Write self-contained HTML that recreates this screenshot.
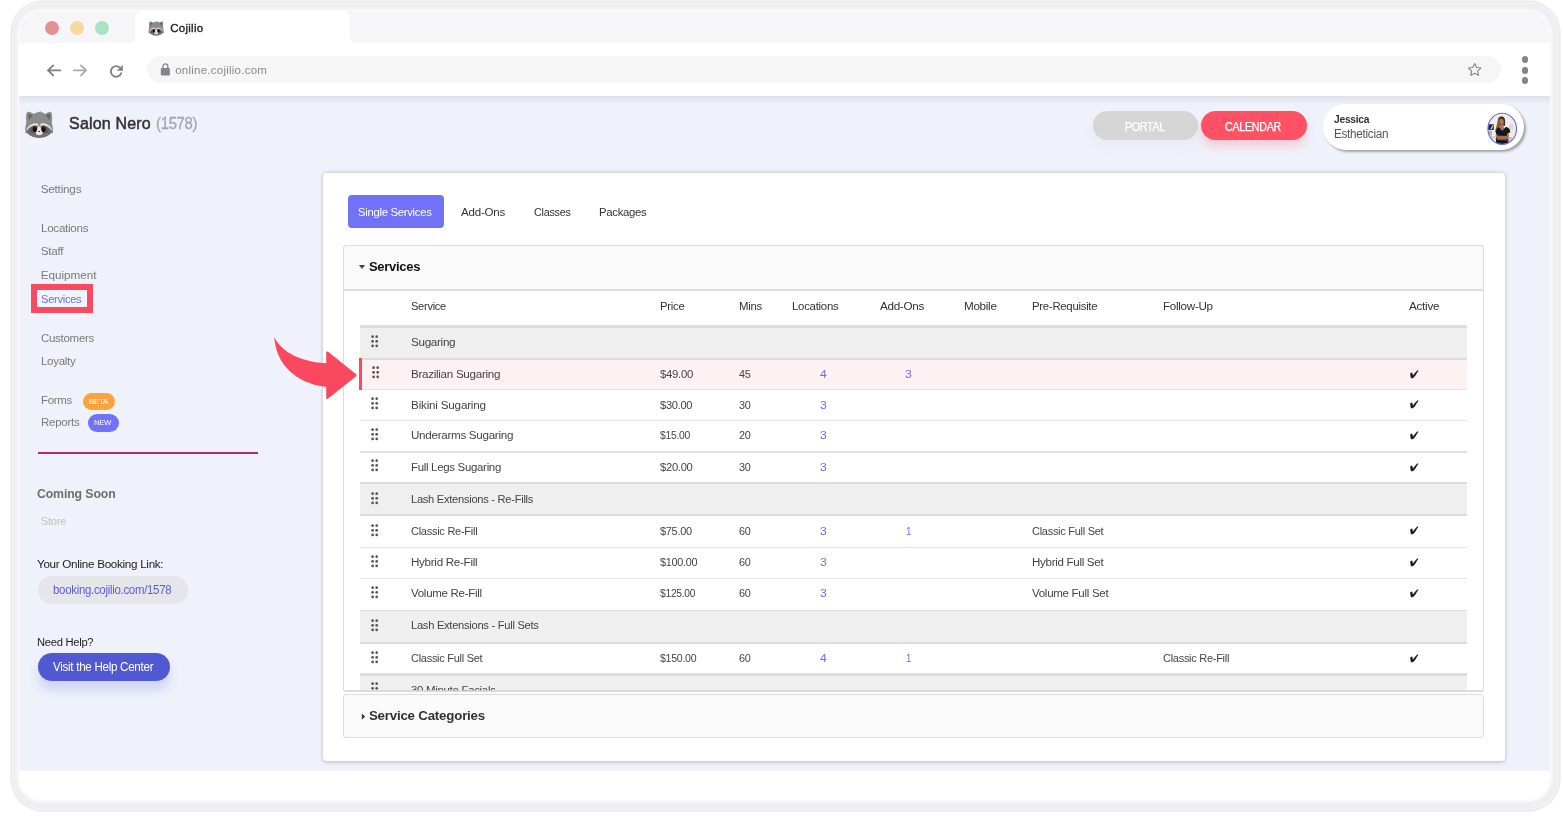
<!DOCTYPE html>
<html><head><meta charset="utf-8"><title>Cojilio</title>
<style>
*{box-sizing:border-box;margin:0;padding:0}
html,body{width:1563px;height:822px;overflow:hidden;background:#fff;font-family:"Liberation Sans",sans-serif}
.a{position:absolute}
.t{position:absolute;white-space:nowrap;line-height:20px;height:20px}
#frame{left:9.6px;top:-.2px;width:1551.7px;height:812.5px;border-radius:33px;background:#f2f2f1}
#f2{left:10.5px;top:.7px;width:1549.9px;height:810.7px;border-radius:32px;background:#e8e8f2}
#f3{left:11.9px;top:2px;width:1547.4px;height:808.2px;border-radius:31px;background:#f5f5f6}
#f4{left:13.1px;top:3.1px;width:1545.3px;height:806.1px;border-radius:30px;background:#eeeef3}
#edge{left:0;top:0;width:100%;height:100%;border-radius:24px;box-shadow:inset 0 0 0 1.3px rgba(250,250,252,.85)}
#win{left:18px;top:10px;width:1533px;height:791.4px;border-radius:24px;background:#fff;overflow:hidden;box-shadow:0 0 2.5px .6px rgba(251,251,253,.95)}
#pg{left:-18px;top:-10px;width:1563px;height:822px;will-change:transform}
#tabbar{left:0;top:0;width:1563px;height:43.2px;background:#f6f6f9}
#tab{left:135px;top:9.5px;width:215px;height:34px;background:#fff;border-radius:9px 9px 0 0}
.tl{width:14.5px;height:14.5px;border-radius:50%;top:20.7px}
#url{left:146.7px;top:56.3px;width:1354.3px;height:27.1px;border-radius:14px;background:#f6f6f6}
#app{left:0;top:96px;width:1563px;height:674.5px;background:#eff2fb}
#appsh{left:0;top:96px;width:1563px;height:9px;background:linear-gradient(#dfe1ea,#eff2fb)}
#card{left:322.5px;top:173px;width:1182px;height:588px;background:#fff;border-radius:4px;box-shadow:0 .5px 4.5px rgba(0,0,10,.24)}
.hl{left:360px;width:1107px;background:#ddd}
.dots{width:7px;height:12px}
</style></head><body>
<div class="a" id="frame"></div><div class="a" id="f2"></div><div class="a" id="f3"></div><div class="a" id="f4"></div>
<div class="a" id="win"><div class="a" id="pg">
 <div class="a" id="tabbar"></div>
 <div class="a" id="tab"></div>
 <div class="a" style="left:129px;top:37.2px;width:6px;height:6px;background:radial-gradient(circle at 0 0,#f6f6f9 5.6px,#fff 6.2px)"></div>
 <div class="a" style="left:350px;top:37.2px;width:6px;height:6px;background:radial-gradient(circle at 100% 0,#f6f6f9 5.6px,#fff 6.2px)"></div>
 <div class="a tl" style="left:44.7px;background:#e59193"></div>
 <div class="a tl" style="left:69.7px;background:#f6d9a0"></div>
 <div class="a tl" style="left:94.7px;background:#a9e3c1"></div>
 <div class="a" id="url"></div>
 <div class="a" id="app"></div>
 <div class="a" id="appsh"></div>
 <div class="a" id="card"></div>
 <!-- nav icons -->
 <svg class="a" style="left:44px;top:60px" width="90" height="22" viewBox="44 60 90 22" fill="none" stroke-linecap="round" stroke-linejoin="round">
  <path d="M60.3 70.4H48.2M53.2 65.4l-5.2 5 5.2 5" stroke="#7f8084" stroke-width="1.9"/>
  <path d="M73.8 70.4h12.1M80.9 65.4l5.2 5-5.2 5" stroke="#a9abaf" stroke-width="1.9"/>
  <path d="M121.2 73.2a5.3 5.3 0 1 1-1.3-5.6" stroke="#7f8084" stroke-width="1.9"/>
  <path d="M122.6 65.6v4.9h-4.9z" fill="#7f8084" stroke="#7f8084" stroke-width=".6"/>
 </svg>
 <!-- lock -->
 <svg class="a" style="left:159px;top:62px" width="13" height="15" viewBox="159 62 13 15">
  <rect x="160.8" y="67.9" width="9.1" height="7.6" rx="1.2" fill="#85868a"/>
  <path d="M163 68.2v-2a2.4 2.4 0 0 1 4.8 0v2" fill="none" stroke="#85868a" stroke-width="1.3"/>
 </svg>
 <!-- star -->
 <svg class="a" style="left:1466px;top:61px" width="18" height="17" viewBox="1466 61 18 17">
  <path d="M1474.7 63.6l1.9 4 4.3.5-3.2 3 .85 4.3-3.85-2.15-3.85 2.15.85-4.3-3.2-3 4.3-.5z" fill="none" stroke="#7f8084" stroke-width="1.05" stroke-linejoin="round"/>
 </svg>
 <div class="a" style="left:1521.6px;top:56.4px;width:6.2px;height:6.2px;border-radius:50%;background:#838488"></div>
 <div class="a" style="left:1521.6px;top:67.4px;width:6.2px;height:6.2px;border-radius:50%;background:#838488"></div>
 <div class="a" style="left:1521.6px;top:77.4px;width:6.2px;height:6.2px;border-radius:50%;background:#838488"></div>
 <!-- raccoons -->
 <svg class="a" style="left:25px;top:111.4px" width="28.2" height="26.2" viewBox="0 0 28 26"><path d="M2.300.9C3.700.300 6.600 1.400 8.700 3c1.500-.9 3.100-1.500 4.200-1.700l.700-.9.900.8.900-1.200.8 1.300c1.500.2 2.800.8 4 1.600C22.300 1.300 24.900.2 26 .9c1 1.400 1.100 6.300.6 10.300.4 2.300 1 4.700 1.300 7.700l-1.100.7.800 1.900-1.700-.2c-1.500 1.800-4 3.300-7 4.100-1.500.5-3.300.700-5 .700s-3.500-.2-5-.700c-3-.8-5.500-2.300-7-4.100l-1.700.2.800-1.900L0 18.900c.3-3 .9-5.400 1.300-7.700C.800 7.200.900 2.300 2.300.9z" fill="#8b8b8b"/>
 <path d="M3.400 2.700c1.300 0 3 .9 4.300 2.100C6.300 5.800 5 7.200 4.200 8.900 3.500 6.800 3.200 4.500 3.400 2.700z" fill="#646464"/>
 <path d="M24.800 2.700c-1.300 0-3 .9-4.300 2.100 1.400 1 2.700 2.400 3.500 4.100.7-2.100 1-4.400.8-6.200z" fill="#646464"/>
 <path d="M.6 19.400C2.500 16.800 6 14.600 9.800 14.400c1.700-.1 3.100.4 4.300 1.400 1.200-1 2.600-1.500 4.300-1.400 3.800.2 7.300 2.400 9.200 5l-.5.900.6 1.800-1.600-.2c-1.500 1.800-4 3.300-7 4.100-1.500.5-3.300.7-5 .7s-3.500-.2-5-.7c-3-.8-5.500-2.300-7-4.100l-1.600.2.600-1.800z" fill="#727272"/>
 <path d="M1.300 18.700c1.600-3.700 5-6.300 8.700-6.600 1.300-.1 2.400.2 3.100.7l-.4 2c-.7-.5-1.600-.7-2.700-.6-3 .2-5.900 2-8.200 5.200z" fill="#f3e0e6"/>
 <path d="M26.900 18.700c-1.600-3.700-5-6.300-8.700-6.600-1.300-.1-2.400.2-3.100.7l.4 2c.7-.5 1.600-.7 2.700-.6 3 .2 5.900 2 8.200 5.200z" fill="#f3e0e6"/>
 <path d="M4.500 19.300c.3-2.200 2.300-4 5.300-4.200 1.800-.1 3 .9 3.300 2.600.2 1.800-.6 3.600-2.600 4.300-2.700.7-5.600-.5-6-2.700z" fill="#5c5c5c"/>
 <path d="M23.700 19.300c-.3-2.200-2.300-4-5.300-4.200-1.800-.1-3 .9-3.300 2.600-.2 1.800.6 3.600 2.600 4.300 2.700.7 5.600-.5 6-2.700z" fill="#5c5c5c"/>
 <path d="M13 14.500c.3-.6.700-.9 1.100-.9s.8.300 1.100.9c.5 1.400.6 3.300 1.200 4.600.8.900 1.300 1.700 1.200 2.600-.2 1.500-1.600 2.400-3.500 2.400s-3.300-.9-3.500-2.400c-.1-.9.400-1.700 1.200-2.600.6-1.300.7-3.200 1.200-4.600z" fill="#f5e4ea"/>
 <ellipse cx="9.800" cy="18" rx="2.050" ry="2.800" fill="#160d0d"/>
 <ellipse cx="18.400" cy="18" rx="2.050" ry="2.800" fill="#160d0d"/>
 <ellipse cx="10" cy="16.600" rx=".55" ry=".8" fill="#6a5a5a"/>
 <ellipse cx="18.200" cy="16.600" rx=".55" ry=".8" fill="#6a5a5a"/>
 <ellipse cx="14.100" cy="20.200" rx="1.100" ry=".6" fill="#3a2226"/>
 <path d="M13.700 13c.1-.3.200-.5.400-.5s.3.200.4.500l.3 2.500h-1.400z" fill="#7d7d7d"/></svg>
 <svg class="a" style="left:148px;top:21.3px" width="16.3" height="14.3" viewBox="0 0 28 26"><path d="M2.300.9C3.700.300 6.600 1.400 8.700 3c1.500-.9 3.100-1.500 4.200-1.700l.700-.9.900.8.900-1.200.8 1.300c1.500.2 2.800.8 4 1.600C22.300 1.300 24.900.2 26 .9c1 1.400 1.100 6.300.6 10.300.4 2.300 1 4.700 1.300 7.700l-1.100.7.800 1.900-1.700-.2c-1.500 1.800-4 3.300-7 4.100-1.500.5-3.300.700-5 .700s-3.500-.2-5-.700c-3-.8-5.500-2.300-7-4.100l-1.700.2.800-1.900L0 18.900c.3-3 .9-5.400 1.300-7.700C.800 7.200.900 2.300 2.300.9z" fill="#8b8b8b"/>
 <path d="M3.400 2.700c1.300 0 3 .9 4.300 2.100C6.300 5.800 5 7.200 4.200 8.900 3.500 6.800 3.200 4.500 3.400 2.700z" fill="#646464"/>
 <path d="M24.800 2.700c-1.300 0-3 .9-4.300 2.100 1.400 1 2.700 2.400 3.500 4.100.7-2.100 1-4.400.8-6.200z" fill="#646464"/>
 <path d="M.6 19.400C2.500 16.800 6 14.600 9.800 14.400c1.700-.1 3.100.4 4.300 1.400 1.200-1 2.600-1.500 4.300-1.400 3.800.2 7.300 2.400 9.200 5l-.5.900.6 1.800-1.600-.2c-1.500 1.800-4 3.300-7 4.100-1.500.5-3.300.7-5 .7s-3.500-.2-5-.7c-3-.8-5.500-2.300-7-4.100l-1.600.2.600-1.800z" fill="#727272"/>
 <path d="M1.300 18.700c1.600-3.700 5-6.300 8.700-6.600 1.300-.1 2.400.2 3.100.7l-.4 2c-.7-.5-1.600-.7-2.700-.6-3 .2-5.900 2-8.200 5.200z" fill="#f3e0e6"/>
 <path d="M26.900 18.700c-1.600-3.700-5-6.300-8.700-6.600-1.300-.1-2.400.2-3.100.7l.4 2c.7-.5 1.600-.7 2.700-.6 3 .2 5.900 2 8.200 5.200z" fill="#f3e0e6"/>
 <path d="M4.500 19.300c.3-2.200 2.300-4 5.300-4.200 1.800-.1 3 .9 3.300 2.600.2 1.800-.6 3.600-2.600 4.300-2.700.7-5.600-.5-6-2.700z" fill="#5c5c5c"/>
 <path d="M23.700 19.300c-.3-2.200-2.300-4-5.300-4.200-1.800-.1-3 .9-3.300 2.600-.2 1.800.6 3.600 2.600 4.300 2.700.7 5.600-.5 6-2.700z" fill="#5c5c5c"/>
 <path d="M13 14.500c.3-.6.700-.9 1.100-.9s.8.300 1.100.9c.5 1.400.6 3.300 1.200 4.600.8.900 1.300 1.700 1.200 2.600-.2 1.500-1.600 2.400-3.500 2.400s-3.300-.9-3.500-2.400c-.1-.9.400-1.700 1.200-2.600.6-1.300.7-3.200 1.200-4.600z" fill="#f5e4ea"/>
 <ellipse cx="9.800" cy="18" rx="2.050" ry="2.800" fill="#160d0d"/>
 <ellipse cx="18.400" cy="18" rx="2.050" ry="2.800" fill="#160d0d"/>
 <ellipse cx="10" cy="16.600" rx=".55" ry=".8" fill="#6a5a5a"/>
 <ellipse cx="18.200" cy="16.600" rx=".55" ry=".8" fill="#6a5a5a"/>
 <ellipse cx="14.100" cy="20.200" rx="1.100" ry=".6" fill="#3a2226"/>
 <path d="M13.700 13c.1-.3.200-.5.400-.5s.3.200.4.500l.3 2.500h-1.400z" fill="#7d7d7d"/></svg>
 <!-- header buttons -->
 <div class="a" style="left:1093px;top:111.3px;width:105.3px;height:28.7px;border-radius:15px;background:#d6d6d6;box-shadow:0 8px 10px rgba(200,200,215,.14)"></div>
 <div class="a" style="left:1200.6px;top:111.3px;width:106px;height:28.7px;border-radius:15px;background:#fe5166;box-shadow:0 7px 10px rgba(254,81,102,.22)"></div>
 <!-- user card -->
 <div class="a" style="left:1322.7px;top:104.2px;width:201.6px;height:45.6px;border-radius:23px;background:#fff;box-shadow:2px 2px 2.5px rgba(0,0,0,.33)"></div>
 <svg class="a" style="left:1482px;top:108px" width="40" height="40" viewBox="0 0 40 40">
  <defs><clipPath id="av"><ellipse cx="20.2" cy="20.8" rx="14.1" ry="15.3"/></clipPath></defs>
  <g clip-path="url(#av)">
   <rect width="40" height="40" fill="#efeee9"/>
   <rect x="5" y="16.300" width="6.800" height="5.600" fill="#22252b"/>
   <path d="M8.400 21l2.300-4 .7.400-1.700 3.800z" fill="#e4e4e4"/>
   <rect x="6.800" y="22.900" width="3.200" height="4.600" fill="#c6b48f"/>
   <rect x="5" y="28" width="9" height="3.400" fill="#d3d8df"/>
   <rect x="27.200" y="16" width="4.300" height="5.600" fill="#dcdcdc"/>
   <rect x="26" y="29" width="4" height="6" fill="#c9c9c9"/>
   <path d="M18.900 8.600c-2.200.100-3 2-3.300 4.400-.4 3.700-1.700 6.300-2.300 9.800-.2 1.200.700 1.700 1.900 1.400l2.300-1 1.200-5.400 4.200.300c.500-2.700.500-6-.400-7.800-.7-1.200-1.900-1.800-3.600-1.700z" fill="#87563f"/>
   <path d="M19 8.700c-1.600.1-2.500 1.400-2.800 3.200.900-1.200 2.200-1.700 3.700-1.300 1.300.400 2 1.500 2.100 3l.100 3.900.700-.100c.400-2.400.400-5.400-.400-7-.700-1.200-1.800-1.800-3.400-1.700z" fill="#3c2820"/>
   <ellipse cx="19.500" cy="13.600" rx="1.750" ry="2.600" fill="#ab7a62"/>
   <path d="M17.800 17.500h3.400l1.200 3.500-2.600 3-3.200-3z" fill="#a87258"/>
   <path d="M17 19.400l3.400 3.600 3.200-3.900c1.900.200 3.700 1.200 4.200 2.700l.500 2.400-2.200 1 .300 12h-12.600l.400-10.600-.500-2.400c.200-2.600 1.300-4.300 3.300-4.800z" fill="#10191c"/>
   <path d="M13.700 26.300c-.100 1.800.300 3.600 1.200 4.500l10.600.600c1.100-.8 1.500-2.900 1.400-5.700l-1.800-.8-.5 3.100-9.300-.4-.1-2.100z" fill="#a76b50"/>
   <path d="M14.900 30.800l10.600.600-.1 1-10.300-.5z" fill="#8a543d"/>
  </g>
  <ellipse cx="20.200" cy="20.800" rx="14.300" ry="15.600" fill="none" stroke="#6464f3" stroke-width="1.100"/>
 </svg>
 <!-- sidebar shapes -->
 <div class="a" style="left:31.1px;top:284px;width:62.1px;height:29.1px;border:6px solid #fa4a61;background:#f1f5fb"></div>
 <div class="a" style="left:83px;top:392.8px;width:31.7px;height:17.2px;border-radius:9px;background:#ffa23c"></div>
 <div class="a" style="left:87.5px;top:414.2px;width:31px;height:17.8px;border-radius:9px;background:#7272f8"></div>
 <div class="a" style="left:37.5px;top:451.8px;width:220.5px;height:2.1px;background:#b42a62"></div>
 <div class="a" style="left:37.5px;top:575.8px;width:150.2px;height:28.7px;border-radius:15px;background:#e6e6ea"></div>
 <div class="a" style="left:37.5px;top:653px;width:132.2px;height:27.8px;border-radius:14px;background:#5059d1;box-shadow:0 9px 11px rgba(80,89,209,.2)"></div>
 <!-- card content -->
 <div class="a" style="left:347.5px;top:195px;width:96.7px;height:32.8px;border-radius:4px;background:#7272f8"></div>
 <div class="a" style="left:343.2px;top:245px;width:1141.2px;height:44.6px;border:1px solid #ddd;border-bottom:none;border-radius:3px 3px 0 0;background:#fafafa"></div>
 <div class="a" style="left:343.2px;top:288.6px;width:1141.2px;height:403px;border:1px solid #dcdcdc;border-top:2px solid #ddd;border-radius:0 0 3px 3px;background:#fff"></div>
 <div class="a" style="left:343.2px;top:694.2px;width:1141.2px;height:43.6px;border:1px solid #ddd;border-radius:3px;background:#fafafa"></div>
 <svg class="a" style="left:358px;top:263px" width="9" height="8" viewBox="358 263 9 8"><path d="M358.9 265.1h6.2l-3.1 3.9z" fill="#444"/></svg>
 <svg class="a" style="left:360px;top:712px" width="7" height="10" viewBox="360 712 7 10"><path d="M361.8 713.4v6.4l3.3-3.2z" fill="#333"/></svg>
 <div class="a" style="left:360px;top:325.4px;width:1107px;height:2.2px;background:#dcdcdc"></div>
 <div class="a" style="left:360px;top:327.6px;width:1107px;height:30.0px;background:#efefef"></div>
 <div class="a" style="left:360px;top:357.6px;width:1107px;height:2.0px;background:#dcdcdc"></div>
 <div class="a" style="left:360px;top:359.6px;width:1107px;height:29.2px;background:#fdf1f1"></div>
 <div class="a" style="left:360px;top:388.8px;width:1107px;height:1.3px;background:#e2e2e2"></div>
 <div class="a" style="left:359.3px;top:357.7px;width:2.6px;height:32.6px;background:#f9485f"></div>
 <div class="a" style="left:360px;top:419.6px;width:1107px;height:1.6px;background:#e2e2e2"></div>
 <div class="a" style="left:360px;top:451.3px;width:1107px;height:1.7px;background:#e2e2e2"></div>
 <div class="a" style="left:360px;top:482px;width:1107px;height:2.2px;background:#dcdcdc"></div>
 <div class="a" style="left:360px;top:484.2px;width:1107px;height:30.0px;background:#efefef"></div>
 <div class="a" style="left:360px;top:514.2px;width:1107px;height:1.6px;background:#dcdcdc"></div>
 <div class="a" style="left:360px;top:546.7px;width:1107px;height:1.4px;background:#e2e2e2"></div>
 <div class="a" style="left:360px;top:577.6px;width:1107px;height:1.6px;background:#e2e2e2"></div>
 <div class="a" style="left:360px;top:609.6px;width:1107px;height:1.8px;background:#dcdcdc"></div>
 <div class="a" style="left:360px;top:611.4px;width:1107px;height:30.6px;background:#efefef"></div>
 <div class="a" style="left:360px;top:642px;width:1107px;height:2.0px;background:#dcdcdc"></div>
 <div class="a" style="left:360px;top:673.4px;width:1107px;height:2.4px;background:#dcdcdc"></div>
 <div class="a" style="left:360px;top:675.8px;width:1107px;height:14.4px;background:#efefef"></div>
 <svg class="a" style="left:371.2px;top:334.7px" width="8" height="13" viewBox="0 0 8 13" fill="#555"><circle cx="1.6" cy="1.7" r="1.35"/><circle cx="1.6" cy="6.3" r="1.35"/><circle cx="1.6" cy="10.9" r="1.35"/><circle cx="5.7" cy="1.7" r="1.35"/><circle cx="5.7" cy="6.3" r="1.35"/><circle cx="5.7" cy="10.9" r="1.35"/></svg>
 <svg class="a" style="left:372.09999999999997px;top:366.4px" width="8" height="13" viewBox="0 0 8 13" fill="#555"><circle cx="1.6" cy="1.7" r="1.35"/><circle cx="1.6" cy="6.3" r="1.35"/><circle cx="1.6" cy="10.9" r="1.35"/><circle cx="5.7" cy="1.7" r="1.35"/><circle cx="5.7" cy="6.3" r="1.35"/><circle cx="5.7" cy="10.9" r="1.35"/></svg>
 <svg class="a" style="left:371.2px;top:397.2px" width="8" height="13" viewBox="0 0 8 13" fill="#555"><circle cx="1.6" cy="1.7" r="1.35"/><circle cx="1.6" cy="6.3" r="1.35"/><circle cx="1.6" cy="10.9" r="1.35"/><circle cx="5.7" cy="1.7" r="1.35"/><circle cx="5.7" cy="6.3" r="1.35"/><circle cx="5.7" cy="10.9" r="1.35"/></svg>
 <svg class="a" style="left:371.2px;top:428.2px" width="8" height="13" viewBox="0 0 8 13" fill="#555"><circle cx="1.6" cy="1.7" r="1.35"/><circle cx="1.6" cy="6.3" r="1.35"/><circle cx="1.6" cy="10.9" r="1.35"/><circle cx="5.7" cy="1.7" r="1.35"/><circle cx="5.7" cy="6.3" r="1.35"/><circle cx="5.7" cy="10.9" r="1.35"/></svg>
 <svg class="a" style="left:371.2px;top:459.2px" width="8" height="13" viewBox="0 0 8 13" fill="#555"><circle cx="1.6" cy="1.7" r="1.35"/><circle cx="1.6" cy="6.3" r="1.35"/><circle cx="1.6" cy="10.9" r="1.35"/><circle cx="5.7" cy="1.7" r="1.35"/><circle cx="5.7" cy="6.3" r="1.35"/><circle cx="5.7" cy="10.9" r="1.35"/></svg>
 <svg class="a" style="left:371.2px;top:492.2px" width="8" height="13" viewBox="0 0 8 13" fill="#555"><circle cx="1.6" cy="1.7" r="1.35"/><circle cx="1.6" cy="6.3" r="1.35"/><circle cx="1.6" cy="10.9" r="1.35"/><circle cx="5.7" cy="1.7" r="1.35"/><circle cx="5.7" cy="6.3" r="1.35"/><circle cx="5.7" cy="10.9" r="1.35"/></svg>
 <svg class="a" style="left:371.2px;top:523.7px" width="8" height="13" viewBox="0 0 8 13" fill="#555"><circle cx="1.6" cy="1.7" r="1.35"/><circle cx="1.6" cy="6.3" r="1.35"/><circle cx="1.6" cy="10.9" r="1.35"/><circle cx="5.7" cy="1.7" r="1.35"/><circle cx="5.7" cy="6.3" r="1.35"/><circle cx="5.7" cy="10.9" r="1.35"/></svg>
 <svg class="a" style="left:371.2px;top:554.7px" width="8" height="13" viewBox="0 0 8 13" fill="#555"><circle cx="1.6" cy="1.7" r="1.35"/><circle cx="1.6" cy="6.3" r="1.35"/><circle cx="1.6" cy="10.9" r="1.35"/><circle cx="5.7" cy="1.7" r="1.35"/><circle cx="5.7" cy="6.3" r="1.35"/><circle cx="5.7" cy="10.9" r="1.35"/></svg>
 <svg class="a" style="left:371.2px;top:586.2px" width="8" height="13" viewBox="0 0 8 13" fill="#555"><circle cx="1.6" cy="1.7" r="1.35"/><circle cx="1.6" cy="6.3" r="1.35"/><circle cx="1.6" cy="10.9" r="1.35"/><circle cx="5.7" cy="1.7" r="1.35"/><circle cx="5.7" cy="6.3" r="1.35"/><circle cx="5.7" cy="10.9" r="1.35"/></svg>
 <svg class="a" style="left:371.2px;top:618.7px" width="8" height="13" viewBox="0 0 8 13" fill="#555"><circle cx="1.6" cy="1.7" r="1.35"/><circle cx="1.6" cy="6.3" r="1.35"/><circle cx="1.6" cy="10.9" r="1.35"/><circle cx="5.7" cy="1.7" r="1.35"/><circle cx="5.7" cy="6.3" r="1.35"/><circle cx="5.7" cy="10.9" r="1.35"/></svg>
 <svg class="a" style="left:371.2px;top:650.7px" width="8" height="13" viewBox="0 0 8 13" fill="#555"><circle cx="1.6" cy="1.7" r="1.35"/><circle cx="1.6" cy="6.3" r="1.35"/><circle cx="1.6" cy="10.9" r="1.35"/><circle cx="5.7" cy="1.7" r="1.35"/><circle cx="5.7" cy="6.3" r="1.35"/><circle cx="5.7" cy="10.9" r="1.35"/></svg>
 <svg class="a" style="left:371.2px;top:682.2px" width="8" height="8" viewBox="0 0 8 8" fill="#555"><circle cx="1.6" cy="1.7" r="1.35"/><circle cx="1.6" cy="6.3" r="1.35"/><circle cx="1.6" cy="10.9" r="1.35"/><circle cx="5.7" cy="1.7" r="1.35"/><circle cx="5.7" cy="6.3" r="1.35"/><circle cx="5.7" cy="10.9" r="1.35"/></svg>
 <div class="a" style="left:344.7px;top:690.2px;width:1138.7px;height:1.4px;background:#dcdcdc"></div>
 <div class="a" style="left:344.7px;top:691.6px;width:1138.7px;height:2.6px;background:#fff"></div>
 <svg class="a" style="left:1408.5px;top:368.7px" width="11" height="11" viewBox="0 0 11 11"><path d="M1.2 4.3C1.8 3.8 2.6 3.7 3.3 3.8L4 6.5C5.2 4.600 6.800 2.700 8.600 1.200L9.500 1.800C8.300 3.400 7.300 5 6.600 6.200 5.600 7.700 4.500 8.800 3.500 9.300L1.900 9.300C1.500 7.600 1.300 6 1.200 4.300z" fill="#1c1c1c"/></svg>
 <svg class="a" style="left:1408.5px;top:399.4px" width="11" height="11" viewBox="0 0 11 11"><path d="M1.2 4.3C1.8 3.8 2.6 3.7 3.3 3.8L4 6.5C5.2 4.600 6.800 2.700 8.600 1.200L9.500 1.800C8.300 3.400 7.300 5 6.600 6.200 5.600 7.700 4.500 8.800 3.500 9.300L1.900 9.300C1.500 7.600 1.300 6 1.200 4.300z" fill="#1c1c1c"/></svg>
 <svg class="a" style="left:1408.5px;top:429.9px" width="11" height="11" viewBox="0 0 11 11"><path d="M1.2 4.3C1.8 3.8 2.6 3.7 3.3 3.8L4 6.5C5.2 4.600 6.800 2.700 8.600 1.200L9.500 1.800C8.300 3.400 7.300 5 6.600 6.200 5.600 7.700 4.500 8.800 3.500 9.300L1.900 9.300C1.500 7.600 1.300 6 1.200 4.300z" fill="#1c1c1c"/></svg>
 <svg class="a" style="left:1408.5px;top:461.8px" width="11" height="11" viewBox="0 0 11 11"><path d="M1.2 4.3C1.8 3.8 2.6 3.7 3.3 3.8L4 6.5C5.2 4.600 6.800 2.700 8.600 1.200L9.500 1.800C8.300 3.400 7.300 5 6.600 6.200 5.600 7.700 4.500 8.800 3.500 9.300L1.900 9.300C1.500 7.600 1.300 6 1.200 4.300z" fill="#1c1c1c"/></svg>
 <svg class="a" style="left:1408.5px;top:525.3px" width="11" height="11" viewBox="0 0 11 11"><path d="M1.2 4.3C1.8 3.8 2.6 3.7 3.3 3.8L4 6.5C5.2 4.600 6.800 2.700 8.600 1.200L9.500 1.800C8.300 3.400 7.300 5 6.600 6.200 5.600 7.700 4.500 8.800 3.500 9.300L1.900 9.300C1.500 7.600 1.300 6 1.200 4.300z" fill="#1c1c1c"/></svg>
 <svg class="a" style="left:1408.5px;top:556.9px" width="11" height="11" viewBox="0 0 11 11"><path d="M1.2 4.3C1.8 3.8 2.6 3.7 3.3 3.8L4 6.5C5.2 4.600 6.800 2.700 8.600 1.200L9.500 1.800C8.300 3.400 7.300 5 6.600 6.200 5.600 7.700 4.500 8.800 3.500 9.300L1.900 9.300C1.500 7.600 1.300 6 1.200 4.300z" fill="#1c1c1c"/></svg>
 <svg class="a" style="left:1408.5px;top:587.7px" width="11" height="11" viewBox="0 0 11 11"><path d="M1.2 4.3C1.8 3.8 2.6 3.7 3.3 3.8L4 6.5C5.2 4.600 6.800 2.700 8.600 1.200L9.500 1.800C8.300 3.400 7.300 5 6.600 6.200 5.600 7.700 4.500 8.800 3.500 9.300L1.900 9.300C1.500 7.600 1.300 6 1.200 4.300z" fill="#1c1c1c"/></svg>
 <svg class="a" style="left:1408.5px;top:653.1px" width="11" height="11" viewBox="0 0 11 11"><path d="M1.2 4.3C1.8 3.8 2.6 3.7 3.3 3.8L4 6.5C5.2 4.600 6.800 2.700 8.600 1.200L9.500 1.800C8.300 3.400 7.300 5 6.600 6.200 5.600 7.700 4.500 8.800 3.500 9.300L1.900 9.300C1.500 7.600 1.300 6 1.200 4.300z" fill="#1c1c1c"/></svg>
 <!-- red arrow -->
 <svg class="a" style="left:270px;top:332px" width="92" height="72" viewBox="270 332 92 72">
  <path d="M274.3 336.800C279 348.500 296 361.800 326.200 363.300V352.600c0-1.100 1-1.600 1.900-.9l27.800 22.200c.9.700.9 1.800 0 2.500l-27.800 22.200c-.9.700-1.900.2-1.900-.9V387C296 383.500 275.500 364 274.300 336.800z" fill="#f9485f"/>
 </svg>

<span class="t" style="left:170.20px;top:17.72px;font-size:11.5px;color:#222;letter-spacing:0.279px;-webkit-text-stroke:0.35px #222;">Cojilio</span>
<span class="t" style="left:175.20px;top:60.02px;font-size:11.5px;color:#8a8a8a;letter-spacing:0.242px;">online.cojilio.com</span>
<span class="t" style="left:69.10px;top:113.96px;font-size:16px;color:#333;letter-spacing:0.173px;-webkit-text-stroke:0.5px #333;">Salon Nero</span>
<span class="t" style="left:155.70px;top:113.96px;font-size:16px;color:#a6a6aa;letter-spacing:-0.300px;transform:scaleX(0.9274);transform-origin:0 50%;-webkit-text-stroke:0.3px #a6a6aa;">(1578)</span>
<span class="t" style="left:1125.20px;top:116.64px;font-size:12px;color:#fff;letter-spacing:-0.300px;transform:scaleX(0.8875);transform-origin:0 50%;-webkit-text-stroke:0.25px #fff;">PORTAL</span>
<span class="t" style="left:1224.90px;top:116.64px;font-size:12px;color:#fff;letter-spacing:-0.300px;transform:scaleX(0.8900);transform-origin:0 50%;-webkit-text-stroke:0.25px #fff;">CALENDAR</span>
<span class="t" style="left:1333.70px;top:108.99px;font-size:11px;color:#333;font-weight:bold;letter-spacing:-0.300px;transform:scaleX(0.9351);transform-origin:0 50%;">Jessica</span>
<span class="t" style="left:1333.70px;top:123.64px;font-size:12px;color:#555;letter-spacing:-0.300px;transform:scaleX(0.9784);transform-origin:0 50%;">Esthetician</span>
<span class="t" style="left:40.70px;top:178.95px;font-size:11.7px;color:#7a7a7a;letter-spacing:-0.205px;">Settings</span>
<span class="t" style="left:40.70px;top:217.95px;font-size:11.7px;color:#7a7a7a;letter-spacing:-0.300px;transform:scaleX(0.9969);transform-origin:0 50%;">Locations</span>
<span class="t" style="left:40.70px;top:240.95px;font-size:11.7px;color:#7a7a7a;letter-spacing:-0.257px;">Staff</span>
<span class="t" style="left:40.70px;top:265.15px;font-size:11.7px;color:#7a7a7a;letter-spacing:-0.011px;">Equipment</span>
<span class="t" style="left:40.70px;top:288.75px;font-size:11.7px;color:#6b6bf0;letter-spacing:-0.300px;transform:scaleX(0.9525);transform-origin:0 50%;">Services</span>
<span class="t" style="left:40.70px;top:327.65px;font-size:11.7px;color:#7a7a7a;letter-spacing:-0.300px;transform:scaleX(0.9849);transform-origin:0 50%;">Customers</span>
<span class="t" style="left:40.70px;top:350.65px;font-size:11.7px;color:#7a7a7a;letter-spacing:-0.300px;transform:scaleX(0.9845);transform-origin:0 50%;">Loyalty</span>
<span class="t" style="left:40.70px;top:390.15px;font-size:11.7px;color:#7a7a7a;letter-spacing:-0.300px;transform:scaleX(0.9804);transform-origin:0 50%;">Forms</span>
<span class="t" style="left:40.70px;top:411.75px;font-size:11.7px;color:#7a7a7a;letter-spacing:-0.300px;transform:scaleX(0.9914);transform-origin:0 50%;">Reports</span>
<span class="t" style="left:89.10px;top:391.53px;font-size:8px;color:#fff;letter-spacing:-0.300px;transform:scaleX(0.9839);transform-origin:0 50%;">BETA</span>
<span class="t" style="left:94.10px;top:413.23px;font-size:8px;color:#fff;letter-spacing:-0.300px;transform:scaleX(0.9628);transform-origin:0 50%;">NEW</span>
<span class="t" style="left:36.90px;top:483.54px;font-size:12.3px;color:#6e6e6e;font-weight:bold;letter-spacing:-0.112px;">Coming Soon</span>
<span class="t" style="left:40.70px;top:511.12px;font-size:11.2px;color:#c2c2c2;letter-spacing:-0.237px;">Store</span>
<span class="t" style="left:36.90px;top:554.25px;font-size:11.7px;color:#222;letter-spacing:-0.300px;transform:scaleX(0.9978);transform-origin:0 50%;">Your Online Booking Link:</span>
<span class="t" style="left:52.90px;top:580.04px;font-size:12px;color:#5a5fd9;letter-spacing:-0.300px;transform:scaleX(0.9524);transform-origin:0 50%;">booking.cojilio.com/1578</span>
<span class="t" style="left:36.90px;top:631.75px;font-size:11.7px;color:#222;letter-spacing:-0.300px;transform:scaleX(0.9588);transform-origin:0 50%;">Need Help?</span>
<span class="t" style="left:52.70px;top:657.04px;font-size:12.3px;color:#fff;letter-spacing:-0.300px;transform:scaleX(0.9431);transform-origin:0 50%;">Visit the Help Center</span>
<span class="t" style="left:358.10px;top:202.02px;font-size:11.5px;color:#fff;letter-spacing:-0.300px;transform:scaleX(0.9831);transform-origin:0 50%;">Single Services</span>
<span class="t" style="left:461.10px;top:202.02px;font-size:11.5px;color:#333;letter-spacing:-0.215px;">Add-Ons</span>
<span class="t" style="left:534.40px;top:202.02px;font-size:11.5px;color:#333;letter-spacing:-0.300px;transform:scaleX(0.9410);transform-origin:0 50%;">Classes</span>
<span class="t" style="left:599.40px;top:202.02px;font-size:11.5px;color:#333;letter-spacing:-0.300px;transform:scaleX(0.9873);transform-origin:0 50%;">Packages</span>
<span class="t" style="left:368.90px;top:256.80px;font-size:13px;color:#111;font-weight:bold;letter-spacing:-0.271px;">Services</span>
<span class="t" style="left:368.90px;top:706.19px;font-size:13.3px;color:#333;font-weight:bold;letter-spacing:-0.203px;">Service Categories</span>
<span class="t" style="left:411.10px;top:296.15px;font-size:11.7px;color:#333;letter-spacing:-0.300px;transform:scaleX(0.9493);transform-origin:0 50%;">Service</span>
<span class="t" style="left:659.90px;top:296.15px;font-size:11.7px;color:#333;letter-spacing:-0.300px;transform:scaleX(0.9748);transform-origin:0 50%;">Price</span>
<span class="t" style="left:738.60px;top:296.15px;font-size:11.7px;color:#333;letter-spacing:-0.300px;transform:scaleX(0.9795);transform-origin:0 50%;">Mins</span>
<span class="t" style="left:792.20px;top:296.15px;font-size:11.7px;color:#333;letter-spacing:-0.300px;transform:scaleX(0.9801);transform-origin:0 50%;">Locations</span>
<span class="t" style="left:879.90px;top:296.15px;font-size:11.7px;color:#333;letter-spacing:-0.271px;">Add-Ons</span>
<span class="t" style="left:963.60px;top:296.15px;font-size:11.7px;color:#333;letter-spacing:-0.300px;transform:scaleX(0.9989);transform-origin:0 50%;">Mobile</span>
<span class="t" style="left:1031.60px;top:296.15px;font-size:11.7px;color:#333;letter-spacing:-0.300px;transform:scaleX(0.9760);transform-origin:0 50%;">Pre-Requisite</span>
<span class="t" style="left:1163.10px;top:296.15px;font-size:11.7px;color:#333;letter-spacing:-0.300px;transform:scaleX(0.9978);transform-origin:0 50%;">Follow-Up</span>
<span class="t" style="left:1408.90px;top:296.15px;font-size:11.7px;color:#333;letter-spacing:-0.226px;">Active</span>
<span class="t" style="left:411.10px;top:332.25px;font-size:11.7px;color:#444;letter-spacing:-0.300px;transform:scaleX(0.9978);transform-origin:0 50%;">Sugaring</span>
<span class="t" style="left:411.10px;top:363.95px;font-size:11.7px;color:#444;letter-spacing:-0.300px;transform:scaleX(0.9960);transform-origin:0 50%;">Brazilian Sugaring</span>
<span class="t" style="left:411.10px;top:394.65px;font-size:11.7px;color:#444;letter-spacing:-0.219px;">Bikini Sugaring</span>
<span class="t" style="left:411.10px;top:425.15px;font-size:11.7px;color:#444;letter-spacing:-0.300px;transform:scaleX(0.9967);transform-origin:0 50%;">Underarms Sugaring</span>
<span class="t" style="left:411.10px;top:457.25px;font-size:11.7px;color:#444;letter-spacing:-0.300px;transform:scaleX(0.9776);transform-origin:0 50%;">Full Legs Sugaring</span>
<span class="t" style="left:411.10px;top:488.75px;font-size:11.7px;color:#444;letter-spacing:-0.300px;transform:scaleX(0.9543);transform-origin:0 50%;">Lash Extensions - Re-Fills</span>
<span class="t" style="left:411.10px;top:520.65px;font-size:11.7px;color:#444;letter-spacing:-0.300px;transform:scaleX(0.9448);transform-origin:0 50%;">Classic Re-Fill</span>
<span class="t" style="left:411.10px;top:552.25px;font-size:11.7px;color:#444;letter-spacing:-0.300px;transform:scaleX(0.9956);transform-origin:0 50%;">Hybrid Re-Fill</span>
<span class="t" style="left:411.10px;top:582.95px;font-size:11.7px;color:#444;letter-spacing:-0.300px;transform:scaleX(0.9861);transform-origin:0 50%;">Volume Re-Fill</span>
<span class="t" style="left:411.10px;top:615.45px;font-size:11.7px;color:#444;letter-spacing:-0.300px;transform:scaleX(0.9557);transform-origin:0 50%;">Lash Extensions - Full Sets</span>
<span class="t" style="left:411.10px;top:648.45px;font-size:11.7px;color:#444;letter-spacing:-0.300px;transform:scaleX(0.9415);transform-origin:0 50%;">Classic Full Set</span>
<span class="t" style="left:659.90px;top:363.95px;font-size:11.7px;color:#444;letter-spacing:-0.300px;transform:scaleX(0.9723);transform-origin:0 50%;">$49.00</span>
<span class="t" style="left:738.60px;top:363.95px;font-size:11.7px;color:#444;letter-spacing:-0.300px;transform:scaleX(0.9280);transform-origin:0 50%;">45</span>
<span class="t" style="left:659.90px;top:394.65px;font-size:11.7px;color:#444;letter-spacing:-0.300px;transform:scaleX(0.9489);transform-origin:0 50%;">$30.00</span>
<span class="t" style="left:738.60px;top:394.65px;font-size:11.7px;color:#444;letter-spacing:-0.300px;transform:scaleX(0.9280);transform-origin:0 50%;">30</span>
<span class="t" style="left:659.90px;top:425.15px;font-size:11.7px;color:#444;letter-spacing:-0.300px;transform:scaleX(0.8847);transform-origin:0 50%;">$15.00</span>
<span class="t" style="left:738.60px;top:425.15px;font-size:11.7px;color:#444;letter-spacing:-0.300px;transform:scaleX(0.9280);transform-origin:0 50%;">20</span>
<span class="t" style="left:659.90px;top:457.25px;font-size:11.7px;color:#444;letter-spacing:-0.300px;transform:scaleX(0.9577);transform-origin:0 50%;">$20.00</span>
<span class="t" style="left:738.60px;top:457.25px;font-size:11.7px;color:#444;letter-spacing:-0.300px;transform:scaleX(0.9280);transform-origin:0 50%;">30</span>
<span class="t" style="left:659.90px;top:520.65px;font-size:11.7px;color:#444;letter-spacing:-0.300px;transform:scaleX(0.9343);transform-origin:0 50%;">$75.00</span>
<span class="t" style="left:738.60px;top:520.65px;font-size:11.7px;color:#444;letter-spacing:-0.300px;transform:scaleX(0.9280);transform-origin:0 50%;">60</span>
<span class="t" style="left:659.90px;top:552.25px;font-size:11.7px;color:#444;letter-spacing:-0.300px;transform:scaleX(0.9295);transform-origin:0 50%;">$100.00</span>
<span class="t" style="left:738.60px;top:552.25px;font-size:11.7px;color:#444;letter-spacing:-0.300px;transform:scaleX(0.9280);transform-origin:0 50%;">60</span>
<span class="t" style="left:659.90px;top:582.95px;font-size:11.7px;color:#444;letter-spacing:-0.300px;transform:scaleX(0.8776);transform-origin:0 50%;">$125.00</span>
<span class="t" style="left:738.60px;top:582.95px;font-size:11.7px;color:#444;letter-spacing:-0.300px;transform:scaleX(0.9280);transform-origin:0 50%;">60</span>
<span class="t" style="left:659.90px;top:648.45px;font-size:11.7px;color:#444;letter-spacing:-0.300px;transform:scaleX(0.9023);transform-origin:0 50%;">$150.00</span>
<span class="t" style="left:738.60px;top:648.45px;font-size:11.7px;color:#444;letter-spacing:-0.300px;transform:scaleX(0.9280);transform-origin:0 50%;">60</span>
<span class="t" style="left:819.90px;top:363.95px;font-size:11.7px;color:#6b6bf5;transform:scaleX(1.0436);transform-origin:0 50%;">4</span>
<span class="t" style="left:819.90px;top:394.65px;font-size:11.7px;color:#6b6bf5;transform:scaleX(1.0436);transform-origin:0 50%;">3</span>
<span class="t" style="left:819.90px;top:425.15px;font-size:11.7px;color:#6b6bf5;transform:scaleX(1.0436);transform-origin:0 50%;">3</span>
<span class="t" style="left:819.90px;top:457.25px;font-size:11.7px;color:#6b6bf5;transform:scaleX(1.0436);transform-origin:0 50%;">3</span>
<span class="t" style="left:819.90px;top:520.65px;font-size:11.7px;color:#6b6bf5;transform:scaleX(1.0436);transform-origin:0 50%;">3</span>
<span class="t" style="left:819.90px;top:552.25px;font-size:11.7px;color:#6b6bf5;transform:scaleX(1.0436);transform-origin:0 50%;">3</span>
<span class="t" style="left:819.90px;top:582.95px;font-size:11.7px;color:#6b6bf5;transform:scaleX(1.0436);transform-origin:0 50%;">3</span>
<span class="t" style="left:819.90px;top:648.45px;font-size:11.7px;color:#6b6bf5;transform:scaleX(1.0436);transform-origin:0 50%;">4</span>
<span class="t" style="left:905.40px;top:363.95px;font-size:11.7px;color:#6b6bf5;transform:scaleX(1.0436);transform-origin:0 50%;">3</span>
<span class="t" style="left:906.10px;top:520.65px;font-size:11.7px;color:#6b6bf5;transform:scaleX(0.8288);transform-origin:0 50%;">1</span>
<span class="t" style="left:906.10px;top:648.45px;font-size:11.7px;color:#6b6bf5;transform:scaleX(0.8288);transform-origin:0 50%;">1</span>
<span class="t" style="left:1031.60px;top:520.65px;font-size:11.7px;color:#444;letter-spacing:-0.300px;transform:scaleX(0.9415);transform-origin:0 50%;">Classic Full Set</span>
<span class="t" style="left:1031.60px;top:552.25px;font-size:11.7px;color:#444;letter-spacing:-0.300px;transform:scaleX(0.9882);transform-origin:0 50%;">Hybrid Full Set</span>
<span class="t" style="left:1031.60px;top:582.95px;font-size:11.7px;color:#444;letter-spacing:-0.300px;transform:scaleX(0.9864);transform-origin:0 50%;">Volume Full Set</span>
<span class="t" style="left:1163.10px;top:648.45px;font-size:11.7px;color:#444;letter-spacing:-0.300px;transform:scaleX(0.9420);transform-origin:0 50%;">Classic Re-Fill</span>
<span class="t" style="left:411.10px;top:680.15px;font-size:11.7px;color:#444;letter-spacing:-0.300px;transform:scaleX(0.9780);transform-origin:0 50%;clip-path:inset(0 0 9.9px 0);">30 Minute Facials</span>
</div><div class="a" id="edge"></div></div>
</body></html>
